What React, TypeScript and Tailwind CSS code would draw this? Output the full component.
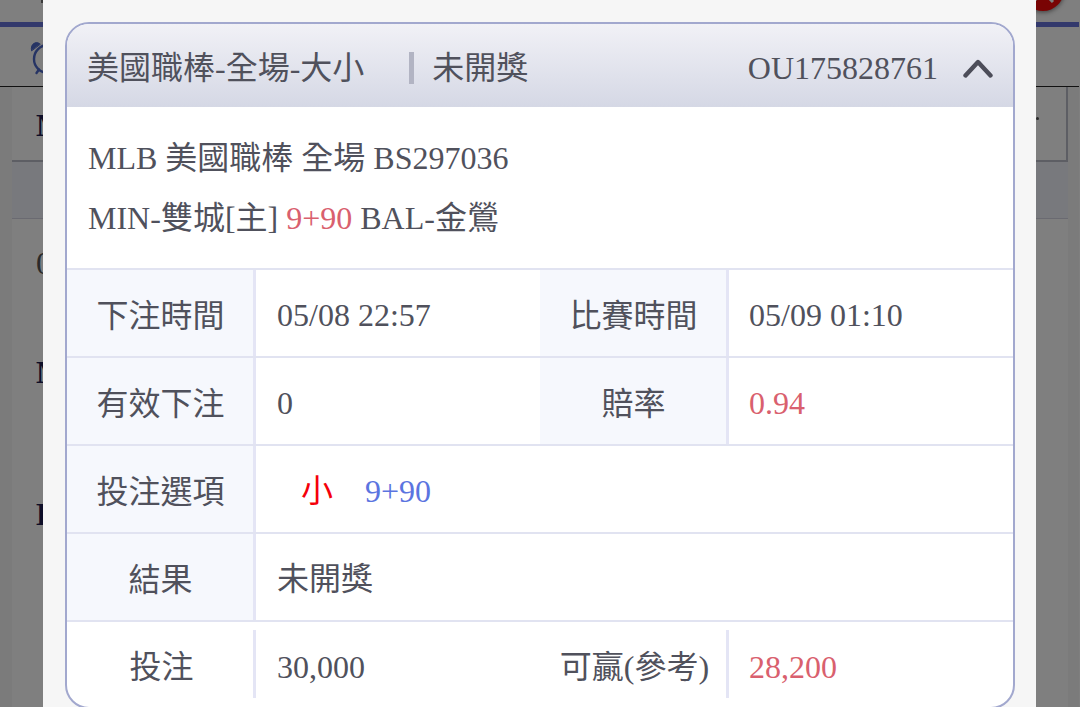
import React from 'react';

type Row = {
  label: string;
  value: React.ReactNode;
  label2?: string;
  value2?: React.ReactNode;
};

const rows: Row[] = [
  { label: '下注時間', value: '05/08 22:57', label2: '比賽時間', value2: '05/09 01:10' },
  { label: '有效下注', value: '0', label2: '賠率', value2: <span className="text-[#d9606e]">0.94</span> },
  {
    label: '投注選項',
    value: (
      <span className="pl-6">
        <span className="text-[#f5000a]">小</span>
        <span className="ml-8 text-[#5b74e0]">9+90</span>
      </span>
    ),
  },
  { label: '結果', value: '未開獎' },
];

const AlarmIcon: React.FC = () => (
  <svg width="36" height="36" viewBox="0 0 36 36" fill="none" stroke="#4c68c8" strokeWidth="2.4" strokeLinecap="round">
    <circle cx="18" cy="18" r="14" />
    <path d="M9 28.5 L6.5 32 M27 28.5 L29.5 32 M18 10 V18.5 H23.5" />
    <path d="M1.5 9.5 C0 3 6 -0.5 10 3 Z M34.5 9.5 C36 3 30 -0.5 26 3 Z" fill="#4c68c8" strokeWidth="1" />
  </svg>
);

/* Page that sits behind the dialog */
const BackPage: React.FC = () => (
  <div className="h-[707px] w-[1079px] bg-[#fefefe] text-[32px] leading-[48px] text-[#1c1c50]">
    <div className="relative flex h-[22px] justify-end overflow-hidden">
      <div className="-mt-[31px] mr-[15px] h-[42px] w-[42px] rounded-full bg-[#f20808] shadow-[0_1px_5px_#777]">
        <svg className="ml-[9px] mt-[11px]" width="24" height="24" viewBox="0 0 24 24" stroke="#fff" strokeWidth="3">
          <path d="M2 2 L22 22 M22 2 L2 22" />
        </svg>
      </div>
      <span className="absolute left-[41px] top-0 h-[3px] w-[3px] bg-[#777]" />
    </div>
    <div className="h-[5px] bg-[#6672d8]" />
    <div className="flex h-[59px] items-start pl-[30px] pt-[14px]">
      <AlarmIcon />
    </div>
    <div className="h-px bg-[#222]" />
    <div className="h-[620px] bg-[#f6f6f6] pl-3 pr-[11px]">
      <div className="h-full bg-[#fefefe]">
        <div className="flex h-[75px] items-center border-b-2 border-r-2 border-[#bbbcc8] pl-6 pt-[2px]">
          <span className="grow font-bold">MLB</span>
          <span className="mb-3 mr-[27px] h-[3px] w-[3px] rounded-full bg-[#555]" />
        </div>
        <div className="h-[57px] border-b border-[#d4d5e2] bg-[#f1f3fa]" />
        <div className="pl-6">
          <p className="mt-5 text-[#555]">05/08</p>
          <p className="mt-[61px] font-bold">MIN</p>
          <p className="mt-[94px] font-bold">BAL</p>
        </div>
      </div>
    </div>
  </div>
);

const Label: React.FC<{ children: React.ReactNode }> = ({ children }) => (
  <div className="flex w-[189px] shrink-0 items-center justify-center border-r-[3px] border-[#e4e5f5] bg-[#f6f8fd] pl-px pt-[5px]">
    {children}
  </div>
);

const FooterLabel: React.FC<{ children: React.ReactNode }> = ({ children }) => (
  <div className="my-2 flex h-[68px] w-[189px] shrink-0 items-center justify-center border-r-[3px] border-[#e4e5f5] pl-[3px] pt-[6px]">
    {children}
  </div>
);

const BetCard: React.FC = () => (
  <div className="h-[687px] overflow-hidden rounded-[24px] border-2 border-[#a2a8ce] bg-white">
    {/* Header */}
    <div className="flex h-[83px] items-center bg-linear-to-b from-[#f1f1f6] to-[#d5d8e5] pl-5 pr-5 pt-1">
      <span className="pt-px">美國職棒-全場-大小</span>
      <span className="ml-[45px] h-8 w-[5px] bg-[#b2b4c3]" />
      <span className="ml-[18px] grow pt-px">未開獎</span>
      <span>OU175828761</span>
      <svg className="ml-[25px] mt-[3px]" width="30" height="20" viewBox="0 0 30 20" fill="none" stroke="#4c4d59" strokeWidth="4.4" strokeLinecap="round" strokeLinejoin="round">
        <path d="M2.5 16.5 L15 3 L27.5 16.5" />
      </svg>
    </div>

    {/* Match */}
    <div className="h-[161px] pl-[21px] pt-[21px] leading-[60px]">
      <p>MLB 美國職棒 全場 BS297036</p>
      <p>
        MIN-雙城[主] <span className="text-[#d9606e]">9+90</span> BAL-金鶯
      </p>
    </div>

    {/* Details */}
    {rows.map((row) => (
      <div key={row.label} className="flex h-[88px] border-t-2 border-[#e1e3f1]">
        <Label>{row.label}</Label>
        <div className="flex grow items-center pl-[21px] pt-1">{row.value}</div>
        {row.label2 && (
          <>
            <Label>{row.label2}</Label>
            <div className="flex w-[284px] items-center pl-5 pt-1">{row.value2}</div>
          </>
        )}
      </div>
    ))}
    <div className="flex h-[88px] border-t-2 border-[#e1e3f1]">
      <FooterLabel>投注</FooterLabel>
      <div className="flex grow items-center pl-[21px] pt-1">30,000</div>
      <FooterLabel>可贏(參考)</FooterLabel>
      <div className="flex w-[284px] items-center pl-5 pt-1 text-[#d9606e]">28,200</div>
    </div>
  </div>
);

const App: React.FC = () => {
  return (
    <div className="relative h-[707px] w-[1080px] overflow-hidden bg-white font-['Liberation_Serif','Noto_Sans_CJK_TC',sans-serif]">
      <BackPage />
      <div className="absolute inset-0 bg-black/50">
        <div className="ml-[43px] h-[730px] w-[993px] bg-[#f6f6f6] pl-[22px] pr-[21px] pt-[22px] text-[32px] leading-[48px] text-[#50515c]">
          <BetCard />
        </div>
      </div>
    </div>
  );
};

export default App;
